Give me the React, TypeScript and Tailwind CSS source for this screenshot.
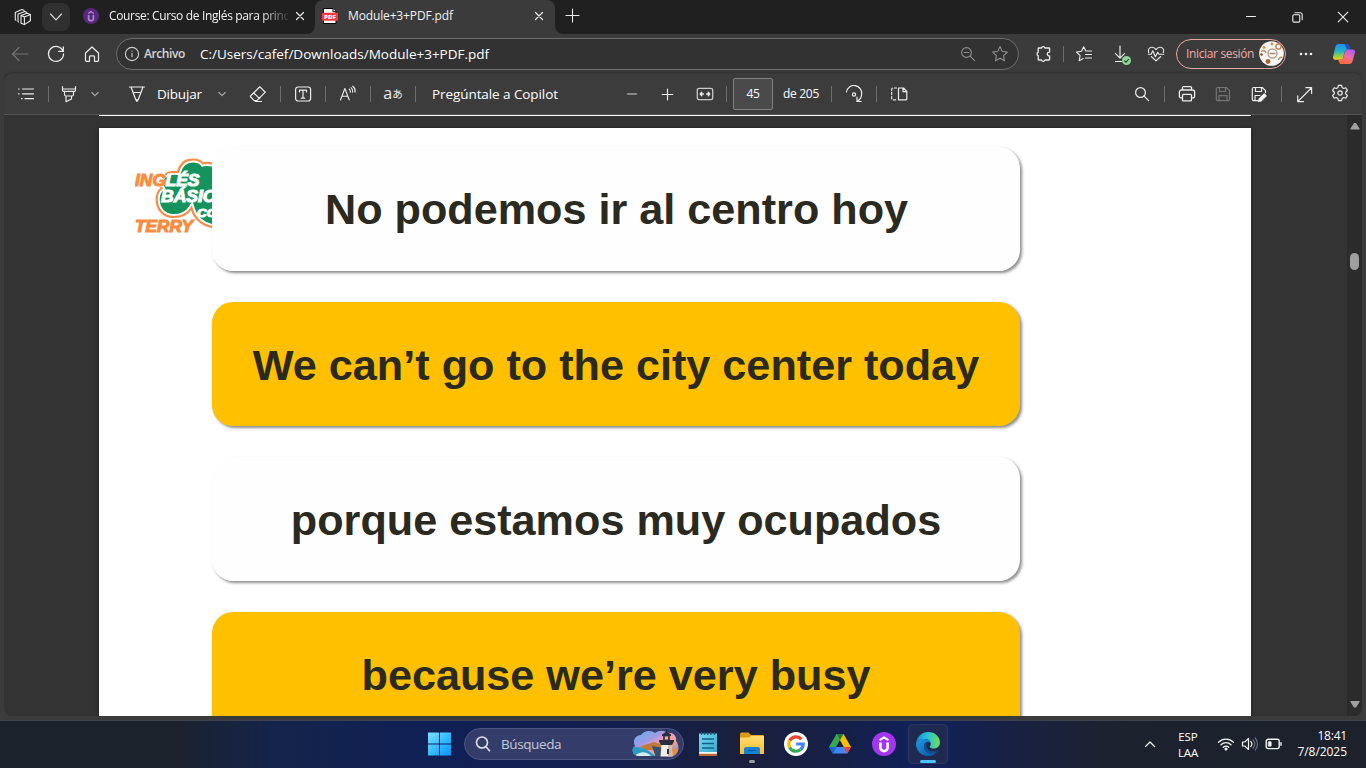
import type { ReactNode } from "react";

const ui = "font-['Open_Sans','Noto_Sans',sans-serif]";

function Icon({
  w = 18,
  h = 18,
  sw = 1.1,
  color = "#ececec",
  children,
}: {
  w?: number;
  h?: number;
  sw?: number;
  color?: string;
  children: ReactNode;
}) {
  return (
    <svg
      width={w}
      height={h}
      viewBox={`0 0 ${w} ${h}`}
      fill="none"
      stroke={color}
      strokeWidth={sw}
      strokeLinecap="round"
      strokeLinejoin="round"
      className="block shrink-0"
    >
      {children}
    </svg>
  );
}

function Slot({ className, children }: { className: string; children: ReactNode }) {
  return <div className={`flex shrink-0 items-center justify-center ${className}`}>{children}</div>;
}

function Label({ text, className }: { text: string; className: string }) {
  return <div className={`shrink-0 leading-5 whitespace-nowrap ${className}`}>{text}</div>;
}

function Divider({ className = "" }: { className?: string }) {
  return <div className={`h-4 w-px shrink-0 bg-[#6e6e6e] ${className}`} />;
}

function Chevron({ color = "#a8a8a8" }: { color?: string }) {
  return (
    <Icon w={10} h={8} color={color}>
      <path d="M1.8 2.5 5 5.7 8.2 2.5" />
    </Icon>
  );
}

function Udemy({ size, bg, fg }: { size: number; bg: string; fg: string }) {
  return (
    <svg width={size} height={size} viewBox="0 0 24 24" className="block shrink-0">
      <circle cx="12" cy="12" r="12" fill={bg} />
      <path d="M7.6 8.2 12 5.4l4.4 2.8" fill="none" stroke={fg} strokeWidth="2" />
      <path d="M8.4 10.5v5.2a3.6 3.4 0 0 0 7.2 0v-5.2" fill="none" stroke={fg} strokeWidth="2.6" />
    </svg>
  );
}

function TabStrip() {
  return (
    <div className="flex h-[34px] shrink-0 bg-[#202020]">
      <Slot className="h-[34px] w-[42px] pl-[3px]">
        <Icon w={18} h={18}>
          <path d="M7 7.6 13 5.2l3.4 1.2v6.400L10.4 16.600 7 15.200ZM7 7.600l3.400 1.300 6-2.500M10.400 8.900v7.700" />
          <path d="M4.600 14 4 13.700V6.200L10.500 3.400l2.200.8M2 12.200 1.300 11.800V4.400L7.800 1.600l2.200.7" />
        </Icon>
      </Slot>
      <Slot className="mt-[3px] h-7 w-7 rounded-lg bg-[#303030]">
        <Icon w={14} h={10} color="#dcdcdc">
          <path d="M1.5 2 7 7.8 12.5 2" />
        </Icon>
      </Slot>
      <div className="flex h-[32px] w-[245px] items-center pl-[13px]">
        <Udemy size={16} bg="#58277f" fg="#a98bc6" />
        <div className="ml-[10px] w-[179px] overflow-hidden [mask-image:linear-gradient(to_right,#000_152px,transparent_182px)]">
          <Label text="Course: Curso de Inglés para princ" className="text-[12px] tracking-[-0.35px] text-[#f2f2f2]" />
        </div>
        <Slot className="ml-[5px] w-[14px]">
          <Icon w={10} h={10} sw={1.2}>
            <path d="M1.5 1.5l7 7M8.5 1.5l-7 7" />
          </Icon>
        </Slot>
      </div>
      <div className="relative flex h-[34px] w-[240px] items-center rounded-t-lg bg-[#3b3b3b] pb-[2px] pl-[7px]">
        <svg width="8" height="8" className="absolute bottom-0 -left-2">
          <path d="M8 0v8H0a8 8 0 0 0 8-8Z" fill="#3b3b3b" />
        </svg>
        <svg width="8" height="8" className="absolute -right-2 bottom-0">
          <path d="M0 0v8h8a8 8 0 0 1-8-8Z" fill="#3b3b3b" />
        </svg>
        <svg width="16" height="16" viewBox="0 0 16 16" className="block">
          <path d="M1.500 .5h9.500l3 3.200V15.500H1.500Z" fill="#fff" stroke="#000" strokeWidth="1" />
          <path d="M11 .5v3.200h3" fill="#fff" stroke="#000" />
          <rect x="0" y="4.700" width="16" height="8" rx="1" fill="#f5383c" />
          <text x="2" y="10.800" fontSize="5.800" fontWeight="800" fill="#fff" textLength="12" lengthAdjust="spacingAndGlyphs">
            PDF
          </text>
        </svg>
        <Label text="Module+3+PDF.pdf" className="ml-[10px] w-[107px] text-[12px] tracking-[-0.14px] text-[#f2f2f2]" />
        <Slot className="ml-[77px] w-[14px]">
          <Icon w={10} h={10} sw={1.2}>
            <path d="M1.5 1.5l7 7M8.5 1.5l-7 7" />
          </Icon>
        </Slot>
      </div>
      <Slot className="h-[31px] w-[35px]">
        <Icon w={15} h={15}>
          <path d="M7.5 1v13M1 7.5h13" />
        </Icon>
      </Slot>
      <div className="ml-auto flex h-[34px]">
        <Slot className="w-[46px]">
          <Icon w={10} h={10}>
            <path d="M.5 4.5h9" />
          </Icon>
        </Slot>
        <Slot className="w-[46px]">
          <Icon w={11} h={11}>
            <path d="M.8 3.9a1.2 1.2 0 0 1 1.2-1.2h4.6a1.2 1.2 0 0 1 1.2 1.2v5a1.2 1.2 0 0 1-1.2 1.2H2A1.2 1.2 0 0 1 .8 8.900ZM3 .8h5.200a2 2 0 0 1 2 2v5" />
          </Icon>
        </Slot>
        <Slot className="w-[46px]">
          <Icon w={12} h={12}>
            <path d="M1.200 1.200l9.600 9.600M10.800 1.200l-9.600 9.600" />
          </Icon>
        </Slot>
      </div>
    </div>
  );
}

const star = "M9 1.600 11.200 6.300 16.400 7 12.600 10.600 13.500 15.800 9 13.300 4.500 15.800 5.400 10.600 1.600 7 6.800 6.300Z";

function AddressRow() {
  return (
    <div className="flex h-[39px] shrink-0 items-center bg-[#3b3b3b]">
      <Slot className="w-10">
        <Icon w={18} h={18} color="#757575">
          <path d="M17 9H1.500M8 2.500 1.500 9 8 15.500" />
        </Icon>
      </Slot>
      <Slot className="w-8">
        <Icon w={18} h={18} sw={1.300}>
          <path d="M16 6.200A7.500 7.500 0 1 0 16.500 9M16.300 1.800v4.600h-4.600" />
        </Icon>
      </Slot>
      <Slot className="w-10">
        <Icon w={18} h={18} sw={1.200}>
          <path d="M2.500 8 9 2l6.500 6v7.500a.8.8 0 0 1-.8.8H11.500v-4.500a1 1 0 0 0-1-1h-3a1 1 0 0 0-1 1v4.500H3.300a.8.8 0 0 1-.8-.8Z" />
        </Icon>
      </Slot>
      <div className="ml-1 flex h-8 w-[903px] shrink-0 items-center rounded-full border border-[#6d6d6d] bg-[#323232] pl-[7px]">
        <Icon w={16} h={16} color="#d0d0d0">
          <circle cx="8" cy="8" r="6.600" />
          <path d="M8 7.300v3.400M8 5.100v.2" />
        </Icon>
        <Label text="Archivo" className="ml-[4px] w-[43px] text-[12px] font-semibold tracking-[-0.4px] text-[#d6d6d6]" />
        <Label text="C:/Users/cafef/Downloads/Module+3+PDF.pdf" className="ml-[13px] w-[291px] text-[13.500px]" />
        <Slot className="ml-auto w-8">
          <Icon w={16} h={16} color="#8f8f8f">
            <circle cx="6.500" cy="6.500" r="4.900" />
            <path d="M10.200 10.200 14.600 14.600M4.300 6.500h4.400" />
          </Icon>
        </Slot>
        <Slot className="mr-[2px] w-8">
          <Icon color="#8f8f8f">
            <path d={star} />
          </Icon>
        </Slot>
      </div>
      <Slot className="ml-1 w-10">
        <Icon sw={1.300}>
          <path d="M4.800 3h2.600a1.900 1.900 0 0 1 3.600 0h4a.6.600 0 0 1 .6.600v3.500a1.900 1.900 0 1 0 0 3.700v3.600a.6.600 0 0 1-.6.600h-4a1.900 1.900 0 0 1-3.600 0H4.800a.6.600 0 0 1-.6-.6v-3.700a1.900 1.900 0 0 1 0-3.500V3.600a.6.600 0 0 1 .6-.6Z" />
        </Icon>
      </Slot>
      <Divider />
      <Slot className="w-10">
        <Icon>
          <path d="M11.500 6H10.800L8.700 1.800 6.500 6.200 1.500 7l3.600 3.600-.9 5.100 4-2.100M11.500 6h5M10.500 9.500h6M10.500 13h6" />
        </Icon>
      </Slot>
      <div className="relative flex w-[35px] items-center justify-center">
        <Icon sw={1.200}>
          <path d="M7 1v12M2.500 8.700 7 13.200l4.500-4.500M2.500 16.500h6" />
        </Icon>
        <svg width="9" height="9" className="absolute top-[11px] left-[18px]">
          <circle cx="4.500" cy="4.500" r="4.500" fill="#8fd694" />
          <path d="M2.300 4.600 4 6.200 6.900 3" fill="none" stroke="#263826" strokeWidth="1.100" />
        </svg>
      </div>
      <Slot className="w-[34px]">
        <Icon>
          <path d="M1.700 7.500C.6 4.500 2.300 2.300 4.800 2.300 6.800 2.300 8.200 3.300 9 4.600c.8-1.300 2.200-2.300 4.200-2.300 2.500 0 4.200 2.200 3.100 5.200M4.300 11.500 9 15.800l4.700-4.300M1.200 9.300h3l1.600-3.500 2.600 6 2.300-4.600 1.200 2.100h4.900" />
        </Icon>
      </Slot>
      <div className="ml-[3px] flex h-[30px] w-[110px] shrink-0 items-center rounded-full border border-[#e9a7a3] pl-[9px]">
        <Label text="Iniciar sesión" className="w-[70px] text-[12px] tracking-[-0.35px] text-[#f0a9a5]" />
        <svg width="25" height="25" viewBox="0 0 25 25" className="ml-[3px] block">
          <circle cx="12.500" cy="12.500" r="12.300" fill="#faf8f5" />
          <g fill="none" stroke="#c18a5a" strokeWidth="1.500">
            <circle cx="13.500" cy="12.500" r="4.500" stroke="#b9a48f" />
            <path d="M10.500 12.500h6" stroke="#9d8c80" />
            <circle cx="19.500" cy="5.500" r="2.600" />
            <path d="M2 10.500a3 3 0 0 1 5 1.500M19.500 19a3 3 0 0 1 4-2.500" />
          </g>
          <circle cx="9" cy="20.500" r="2.400" fill="#b0622b" />
          <circle cx="5" cy="6.500" r="1.400" fill="#d8913f" />
          <circle cx="13" cy="3" r="1.400" fill="#d88c3c" />
          <circle cx="2.500" cy="13.500" r="1.300" fill="#7c4a2c" />
        </svg>
      </div>
      <Slot className="w-10">
        <svg width="14" height="4">
          <circle cx="2" cy="2" r="1.300" fill="#eee" />
          <circle cx="7" cy="2" r="1.300" fill="#eee" />
          <circle cx="12" cy="2" r="1.300" fill="#eee" />
        </svg>
      </Slot>
      <Slot className="w-9">
        <svg width="22" height="20" viewBox="0 0 22 20">
          <defs>
            <linearGradient id="cpA" x1="0" y1="0" x2="0" y2="1">
              <stop offset="0" stopColor="#1f8ff0" />
              <stop offset=".45" stopColor="#1fb6c8" />
              <stop offset=".75" stopColor="#8fce4a" />
              <stop offset="1" stopColor="#f4d029" />
            </linearGradient>
            <linearGradient id="cpB" x1=".7" y1="0" x2=".3" y2="1">
              <stop offset="0" stopColor="#b05cf0" />
              <stop offset=".5" stopColor="#ef6a9d" />
              <stop offset="1" stopColor="#ff6a2c" />
            </linearGradient>
          </defs>
          <path d="M6 0h7.500c1.500 0 2.200 1 2.700 2.600l.8 2.800h-2.600c-1.500 0-2.200.8-2.600 2.100L10 14c-.5 1.400-1 1.800-2.400 1.800H2.500C.8 15.800-.3 14.400.1 12.400L2.400 3C2.900 1 4 0 6 0Z" fill="url(#cpA)" />
          <path d="M13.800 0c1.500 0 2.200 1 2.700 2.600l.8 2.800h-3.600L12.300 1.600C12 .6 11.500 0 10.500 0Z" fill="#2350c4" />
          <path d="M16 20H8.500c-1.500 0-2.200-1-2.700-2.600l-.5-1.600h2.300c1.400 0 1.900-.5 2.400-1.800l2.100-6.500c.4-1.300 1.100-2.100 2.600-2.100h5c1.700 0 2.700 1.400 2.200 3.300L19.600 17c-.5 2-1.600 3-3.600 3Z" fill="url(#cpB)" />
        </svg>
      </Slot>
    </div>
  );
}

function PdfToolbar() {
  return (
    <div className="mx-1 flex h-[42px] shrink-0 items-center rounded-t-lg border-t border-b border-t-[#373737] border-b-[#555] bg-[#3c3c3c] shadow-[0_-1px_2px_rgba(0,0,0,0.18)]">
      <Slot className="w-11">
        <Icon w={18} h={14} sw={1.200}>
          <path d="M1.500 2h.6M5.500 2h11M1.500 6.800h.6M5.500 6.800h11M4.500 11.700h.6M8 11.700h8.500" />
        </Icon>
      </Slot>
      <Divider />
      <Slot className="w-10">
        <Icon sw={1.200}>
          <path d="M2.500 1.500v3.800a1 1 0 0 0 1 1h11a1 1 0 0 0 1-1V1.500M2.500 4h13M4.500 6.300v3.200a1.500 1.500 0 0 0 1.500 1.500h6a1.500 1.500 0 0 0 1.500-1.500V6.300M6 11v5.700l5.500-2.700V11" />
        </Icon>
      </Slot>
      <Slot className="w-3">
        <Chevron />
      </Slot>
      <Slot className="ml-5 w-8">
        <Icon sw={1.200}>
          <path d="M1.500 2h15M3 2l4.800 12.800h2.400L15 2M5.300 7.500h7.400M8 15l1 1.500 1-1.500" />
        </Icon>
      </Slot>
      <Label text="Dibujar" className="ml-1 w-[46px] text-[13.500px] tracking-[-0.2px]" />
      <Slot className="w-[38px]">
        <Chevron />
      </Slot>
      <Slot className="w-[34px]">
        <Icon sw={1.200}>
          <path d="M10.800 1.800 16.300 7.200 7.800 15.700H5.200L1.700 12a.8.8 0 0 1 0-1.200ZM4.700 8l6 5.600M6.500 16.500h6" />
        </Icon>
      </Slot>
      <Divider className="ml-[5px]" />
      <Slot className="w-11">
        <Icon sw={1.200}>
          <rect x="1.600" y="2" width="15" height="14" rx="2.500" />
          <path d="M5.500 7V5.200h7V7M9 5.200v8M7.300 13.200h3.400" />
        </Icon>
      </Slot>
      <Divider />
      <Slot className="w-11">
        <Icon sw={1.100}>
          <path d="M1.500 15 5.900 3.500 10.300 15M3 11.300h5.700M10.300 4.200c.9.700 1.200 1.700 1.100 2.900M12 2.600c1.400 1 1.900 2.700 1.700 4.500M13.800 1.200c1.900 1.500 2.600 3.600 2.300 5.900" />
        </Icon>
      </Slot>
      <Divider />
      <Slot className="w-11 pb-[3px] text-[#ececec]">
        <span className="text-[16px] leading-none">a</span>
        <span className="pt-[3px] font-['Noto_Sans_CJK_JP',sans-serif] text-[10.500px] leading-none">あ</span>
      </Slot>
      <Divider />
      <Label text="Pregúntale a Copilot" className="ml-4 w-[130px] text-[13.500px] tracking-[-0.08px]" />
      <Slot className="ml-[54px] w-8">
        <Icon w={12} h={4} color="#a0a0a0" sw={1.400}>
          <path d="M1.500 2h9" />
        </Icon>
      </Slot>
      <Slot className="w-[39px]">
        <Icon w={13} h={13} sw={1.200}>
          <path d="M6.500 1.200v10.600M1.200 6.500h10.600" />
        </Icon>
      </Slot>
      <Slot className="w-[35px]">
        <Icon sw={1.300}>
          <rect x="1.300" y="3.300" width="15.400" height="11.400" rx="1.800" stroke="#c8c8c8" />
          <path d="M4.500 9h3M10.500 9h3M5.800 7.300 4.200 9l1.600 1.700M12.200 7.300 13.800 9l-1.600 1.700" />
        </Icon>
      </Slot>
      <Divider className="ml-1" />
      <div className="ml-[6px] flex h-8 w-10 shrink-0 items-center justify-center rounded-[2px] border border-[#808080] bg-[#4a4a4a]">
        <Label text="45" className="text-[12px] tracking-[-0.3px]" />
      </div>
      <Label text="de 205" className="ml-[10px] w-[37px] text-[12px] tracking-[-0.3px]" />
      <Divider className="ml-[11px]" />
      <Slot className="w-11">
        <Icon sw={1.200}>
          <path d="M1.500 7A7.600 7.600 0 0 1 16.600 9.200c0 2.700-1.300 5-3.600 6.600M12 12.200v4.300h4.200" />
          <circle cx="9" cy="9.500" r="1.600" />
        </Icon>
      </Slot>
      <Divider />
      <Slot className="w-11">
        <Icon sw={1.200}>
          <path d="M8.500 3h5l3.300 3.300V14a.8.8 0 0 1-.8.8H8.500ZM13 3v3.700h3.700" />
          <path d="M6.500 3H3a1.300 1.300 0 0 0-1.300 1.300V13.500A1.300 1.300 0 0 0 3 14.800h3.500" strokeDasharray="2.200 2" />
        </Icon>
      </Slot>
      <div className="ml-auto flex items-center">
        <Slot className="w-9">
          <Icon w={16} h={16} sw={1.200}>
            <circle cx="6.500" cy="6.500" r="4.900" />
            <path d="M10.200 10.200 14.600 14.600" />
          </Icon>
        </Slot>
        <Divider className="ml-1" />
        <Slot className="ml-1 w-9">
          <Icon sw={1.300}>
            <path d="M4.500 5V2.600a.9.900 0 0 1 .9-.9h7.200a.9.900 0 0 1 .9.900V5M4.500 12.800H2.800a1.400 1.400 0 0 1-1.400-1.400V7a2 2 0 0 1 2-2h11.200a2 2 0 0 1 2 2v4.400a1.400 1.400 0 0 1-1.400 1.400H13.500" />
            <rect x="4.500" y="9.300" width="9" height="6.500" rx=".9" />
          </Icon>
        </Slot>
        <Slot className="w-9">
          <Icon color="#757575" sw={1.200}>
            <path d="M3.800 2.500h8.500l3.200 3.200v8.500a1.500 1.500 0 0 1-1.500 1.500H3.800a1.500 1.500 0 0 1-1.500-1.500V4a1.500 1.500 0 0 1 1.500-1.500ZM5.500 2.500v4h6v-4M5 15.700v-5h8v5" />
          </Icon>
        </Slot>
        <Slot className="w-9">
          <Icon sw={1.200}>
            <path d="M7.500 15.700H3.800a1.500 1.500 0 0 1-1.500-1.500V4a1.500 1.500 0 0 1 1.500-1.500h8.500l3.200 3.200v2M5.500 2.500v4h6v-4M5 15.500v-5h5" />
            <path d="M8.500 16.500l.7-2.700 5-5 2 2-5 5Z" fill="#fff" />
          </Icon>
        </Slot>
        <Divider className="ml-1" />
        <Slot className="ml-2 w-7">
          <Icon w={17} h={17} sw={1.200}>
            <path d="M2 15.300 15.300 2M9.800 1.700h5.800v5.800M1.700 9.800v5.800h5.800" />
          </Icon>
        </Slot>
        <Slot className="w-11 pb-[2px]">
          <Icon sw={1.200}>
            <path d="M7.400 1.300h3.200l.5 2.300 1.500.9 2.200-.7 1.600 2.800L14.700 8.200v1.700l1.700 1.500-1.600 2.800-2.200-.7-1.500.9-.5 2.300H7.400l-.5-2.300-1.500-.9-2.200.7-1.600-2.800 1.700-1.500V8.200L1.600 6.600l1.600-2.800 2.200.7 1.500-.9Z" />
            <circle cx="9" cy="9" r="2.200" />
          </Icon>
        </Slot>
      </div>
    </div>
  );
}

function Logo() {
  const cloud =
    "M26 30C29 26 34 23 43 24 45 16 50 11.500 58 11.500 63 11.500 66 13 68 15.500 71 14.500 75 14.500 84 17V80C70 79 60 73 56.500 60 52 67 46 69 38.500 69 28 69 21.700 61 21.700 51 21.700 47 23 43 26.700 40 25 37 25 33 26 30Z";
  return (
    <svg width="77" height="90" viewBox="0 0 77 90" className="block overflow-hidden font-['Liberation_Sans',sans-serif]">
      <path d={cloud} fill="#14945c" stroke="#fff" strokeWidth="6" />
      <path d={cloud} fill="none" stroke="#f98c45" strokeWidth="2.200" />
      <path d="M-1 23.500H30.500L28 39H-1Z" fill="#fff" />
      <g fontWeight="900" fontStyle="italic" fontSize="16.500" strokeWidth="1.100">
        <text x="0" y="37.500" textLength="31" lengthAdjust="spacingAndGlyphs" fill="#f98c3e" stroke="#f98c3e">
          ING
        </text>
        <text x="30.500" y="37.500" textLength="34" lengthAdjust="spacingAndGlyphs" fill="#fff" stroke="#fff">
          LÉS
        </text>
        <text x="26" y="54" textLength="68" lengthAdjust="spacingAndGlyphs" fill="#fff" stroke="#fff">
          BÁSICO
        </text>
        <text x="62" y="69" fontSize="11.500" textLength="20" lengthAdjust="spacingAndGlyphs" fill="#fff" stroke="#fff">
          CO
        </text>
        <text x="0" y="84" textLength="58" lengthAdjust="spacingAndGlyphs" fill="#f98c3e" stroke="#f98c3e">
          TERRY
        </text>
      </g>
    </svg>
  );
}

const cards = [
  { text: "No podemos ir al centro hoy", style: "bg-[#fefefe] pt-[2px] pl-px" },
  { text: "We can’t go to the city center today", style: "bg-[#ffc000] pt-1" },
  { text: "porque estamos muy ocupados", style: "bg-[#fefefe] pt-1" },
  { text: "because we’re very busy", style: "bg-[#ffc000] pt-1" },
];

function Viewer() {
  return (
    <div className="flex h-[605px] shrink-0 bg-[#3b3b3b] px-1 pb-1">
      <div className="flex min-w-0 flex-1 overflow-hidden rounded-b-lg bg-[#333]">
        <div className="flex w-[1343px] shrink-0 flex-col overflow-hidden pl-[95px]">
          <div className="h-px w-[1152px] shrink-0 bg-white" />
          <div className="mt-3 flex h-[700px] w-[1152px] shrink-0 bg-white shadow-[0_0_4px_rgba(0,0,0,0.4)]">
            <div className="w-[113px] pt-[20px] pl-9">
              <Logo />
            </div>
            <div className="flex w-[808px] flex-col gap-[31px] pt-[19px]">
              {cards.map((c) => (
                <div
                  key={c.text}
                  className={`flex h-[124px] shrink-0 items-center justify-center rounded-[21px] shadow-[2px_2px_3px_rgba(0,0,0,0.45)] ${c.style}`}
                >
                  <span className="font-['Liberation_Sans',Arial,sans-serif] text-[43.200px] leading-none font-bold whitespace-nowrap text-[#2b2a20]">
                    {c.text}
                  </span>
                </div>
              ))}
            </div>
          </div>
        </div>
        <div className="flex w-[15px] flex-col items-center bg-[#2b2b2b] pt-[7px] pb-[8px]">
          <svg width="10" height="8">
            <path d="M4 1h2l3.500 5.500v1h-9v-1Z" fill="#a0a0a0" />
          </svg>
          <div className="mt-[123px] h-[17px] w-[9px] rounded-full bg-[#9f9f9f]" />
          <svg width="10" height="8" className="mt-auto">
            <path d="M4 7.500h2l3.500-5.500v-1h-9v1Z" fill="#a0a0a0" />
          </svg>
        </div>
      </div>
    </div>
  );
}

function Lighthouse() {
  return (
    <svg width="47" height="28" viewBox="0 0 47 28" className="block">
      <defs>
        <linearGradient id="sky" x1="0" y1="0" x2="1" y2="1">
          <stop offset="0" stopColor="#5cb4f2" />
          <stop offset=".35" stopColor="#9d9be6" />
          <stop offset=".5" stopColor="#eb9cc0" />
          <stop offset=".65" stopColor="#f6a58c" />
          <stop offset="1" stopColor="#4d7fd8" />
        </linearGradient>
        <clipPath id="blob">
          <path d="M6 26C0 25-1 19 3 16 0 10 4 5 9 5c3-5 11-5 14-2 4-3 9-3 12 0 6-1 10 3 9 8 4 4 3 13-3 15Z" />
        </clipPath>
      </defs>
      <g clipPath="url(#blob)">
        <rect width="47" height="28" fill="url(#sky)" />
        <path d="M8 16.500 22 12l10 3v5H14Z" fill="#c07a38" />
        <path d="M20 16l12 2v10H24Z" fill="#34506f" />
        <path d="M0 17c8-1 16 2 24 10v1H0Z" fill="#2a9dc2" />
        <path d="M4 25c5-4 11-4 16 2H4Z" fill="#d5ebf2" />
        <path d="M38 20l9-2v10h-9Z" fill="#e78a45" />
      </g>
      <path d="M29.500 14h10l1 12.500h-12Z" fill="#f3ece4" />
      <path d="M36 14h3.500l1 12.500H36Z" fill="#cbb9b4" />
      <path d="M35 19h2v5h-2Z" fill="#2d3040" />
      <path d="M27 10h15v1.500l-2 3.500H29l-2-3.500ZM30 4.500l4.500-3 4.500 3V6h-9Z" fill="#2c2d3e" />
      <path d="M31 6h7v4h-7Z" fill="#4c4350" />
      <path d="M33 6.500h3v3h-3Z" fill="#f6b65b" />
      <path d="M34.500 0v3" stroke="#232638" />
    </svg>
  );
}

function Taskbar() {
  return (
    <div className="flex h-12 shrink-0 items-center border-t border-[#3d4350] bg-[linear-gradient(to_right,#1c222b_0px,#1c222b_170px,#14244a_270px,#101f55_430px,#131f4e_620px,#1a1f3c_740px,#161f45_830px,#10215a_925px,#182143_1010px,#1c222e_1110px,#1c212b_1366px)] pb-[2px]">
      <svg width="24" height="24" viewBox="0 0 24 24" className="ml-[428px] block">
        <defs>
          <linearGradient id="win" x1="0" y1="0" x2="1" y2="1">
            <stop offset="0" stopColor="#7fe0ff" />
            <stop offset=".5" stopColor="#36bdff" />
            <stop offset="1" stopColor="#0a93fa" />
          </linearGradient>
        </defs>
        <path d="M0 .5h11v11H0ZM12 .5h11v11H12ZM0 12.500h11v11H0ZM12 12.500h11v11H12Z" fill="url(#win)" />
      </svg>
      <div className="ml-3 flex h-8 w-[220px] shrink-0 items-center rounded-full border border-[#4c5480] bg-[#343d69] pl-[9px]">
        <Icon w={18} h={18} color="#dfe1ea" sw={1.600}>
          <circle cx="8" cy="7.500" r="5.500" />
          <path d="M12 11.800 15.500 15.800" />
        </Icon>
        <Label text="Búsqueda" className="ml-[9px] w-[62px] text-[13.500px] tracking-[-0.4px] text-[#c5c8d6]" />
        <div className="mr-[4px] ml-auto">
          <Lighthouse />
        </div>
      </div>
      <Slot className="ml-1 w-10">
        <svg width="18" height="24" viewBox="0 0 18 24">
          <defs>
            <linearGradient id="note" x1="0" y1="0" x2="1" y2="1">
              <stop offset="0" stopColor="#76dcee" />
              <stop offset="1" stopColor="#3aa6cc" />
            </linearGradient>
          </defs>
          <path d="M0 20h18v4H0Z" fill="#b86a3b" />
          <path d="M0 19.500h18v2.300H0Z" fill="#f4f4f4" />
          <path d="M0 1.500h18V20H0Z" fill="url(#note)" />
          <path d="M2.500 0v3M5.500 0v3M8.700 0v3M12 0v3M15.300 0v3" stroke="#1c5a78" strokeWidth="1.300" />
          <path d="M3 7h12M3 11.500h12M3 16h12" stroke="#10648a" strokeWidth="1.500" />
        </svg>
      </Slot>
      <div className="relative ml-1 flex h-10 w-10 items-center justify-center">
        <svg width="24" height="23" viewBox="0 0 24 23">
          <defs>
            <linearGradient id="fold" x1="0" y1="0" x2="0" y2="1">
              <stop offset="0" stopColor="#ffdc72" />
              <stop offset="1" stopColor="#fdc02c" />
            </linearGradient>
          </defs>
          <path d="M0 2a1.500 1.500 0 0 1 1.500-1.500h7L11 3h11.500A1.500 1.500 0 0 1 24 4.500V8H0Z" fill="#dc9a10" />
          <path d="M0 5.500h9L11 3.800h13V22H0Z" fill="url(#fold)" />
          <path d="M4 22v-5a2 2 0 0 1 2-2h12a2 2 0 0 1 2 2v5Z" fill="#1683d8" />
          <path d="M8 18.500h8" stroke="#0d5ca8" strokeWidth="1.300" />
        </svg>
        <div className="absolute bottom-[1px] h-[3px] w-[6px] rounded-full bg-[#9a9ca6]" />
      </div>
      <Slot className="ml-1 w-10">
        <svg width="24" height="24" viewBox="0 0 24 24">
          <circle cx="12" cy="12" r="12" fill="#fff" />
          <g fill="none" strokeWidth="3.200">
            <path d="M17.500 7.300A7.200 7.200 0 0 0 5.700 8.600" stroke="#ea4335" />
            <path d="M5.700 8.600a7.200 7.200 0 0 0 0 6.800" stroke="#fbbc05" />
            <path d="M5.700 15.400a7.200 7.200 0 0 0 10.900 2.200" stroke="#34a853" />
            <path d="M16.600 17.600A7 7 0 0 0 19.200 12H12.200" stroke="#4285f4" />
          </g>
        </svg>
      </Slot>
      <Slot className="ml-1 w-10">
        <svg width="22" height="20" viewBox="0 0 22 20">
          <path d="M7.500 0h7l-3.700 6.300L3.700 19 0 13Z" fill="#34a853" />
          <path d="M7.500 0h7L22 13h-7.200Z" fill="#fbbc04" />
          <path d="M7.500 0h7L11 6.200Z" fill="#188038" />
          <path d="M7.200 13H22l-3.700 6.500H3.700Z" fill="#4285f4" />
          <path d="M0 13h7.200l-3.500 6.500Z" fill="#1967d2" />
          <path d="M14.800 13H22l-3.700 6.500Z" fill="#ea4335" />
        </svg>
      </Slot>
      <Slot className="ml-1 w-10">
        <Udemy size={24} bg="#a435f0" fg="#fff" />
      </Slot>
      <div className="relative ml-1 flex h-10 w-10 shrink-0 items-center justify-center rounded-[4px] border border-[#2b3664] bg-[#1f2a50]">
        <svg width="24" height="24" viewBox="0 0 24 24">
          <defs>
            <linearGradient id="eA" x1="0" y1=".4" x2="1" y2=".4">
              <stop offset="0" stopColor="#1c8fdc" />
              <stop offset=".5" stopColor="#2cc3d4" />
              <stop offset="1" stopColor="#6fe04e" />
            </linearGradient>
            <linearGradient id="eB" x1="0" y1="0" x2="1" y2="1">
              <stop offset="0" stopColor="#1f9be6" />
              <stop offset="1" stopColor="#0c4f9c" />
            </linearGradient>
          </defs>
          <path d="M.3 10.500C1.200 4.400 6.200 0 12.100 0 19 0 24 5 24 10.500c0 3.600-2.800 6-6 6-2.600 0-4.200-.9-4.200-1.800 0-.6 1-1 1-2.900 0-2.500-2.500-4.700-6-4.700C4.500 7.100 1.500 8.700.3 10.500Z" fill="url(#eA)" />
          <path d="M0 12C0 9 3.700 6.900 8.500 7.100c3.700.1 6.300 2.200 6.300 4.700-1-1.500-2.600-2.200-4-1.900-3 .8-4 6 .2 9.500C14.500 22.200 19.500 21 22 18.500 20 22 16.300 24 12 24 5.400 24 0 18.600 0 12Z" fill="url(#eB)" />
          <path d="M8 15.500c.5 5 6 8 11.500 5.300.9-.5 2.300-1.600 2.600-2.300-3.500 1.800-9.500 1.300-11.200-2.500-1-2.200-.4-4.700.6-6-2.100.6-3.700 2.900-3.500 5.500Z" fill="#124f91" />
        </svg>
        <div className="absolute bottom-0 h-[3px] w-4 rounded-full bg-[#4cc2ff]" />
      </div>
      <div className="ml-auto flex h-full items-center">
        <Icon w={12} h={8} color="#f2f2f2" sw={1.300}>
          <path d="M1.500 6.500 6 2l4.500 4.500" />
        </Icon>
        <div className="ml-[20px] flex w-[24px] flex-col items-center pt-[3px] text-[11.500px] tracking-[-0.1px]">
          <div className="leading-4">ESP</div>
          <div className="leading-4">LAA</div>
        </div>
        <div className="ml-[17px] flex items-center">
          <Icon w={18} h={14} color="#f4f4f4" sw={1.300}>
            <path d="M1.500 5.200a10.500 10.500 0 0 1 15 0M4 7.800a7 7 0 0 1 10 0M6.300 10.200a3.800 3.800 0 0 1 5.400 0" />
            <circle cx="9" cy="12" r=".9" fill="#fff" />
          </Icon>
          <div className="ml-[6px]">
            <Icon w={18} h={14} color="#f4f4f4" sw={1.200}>
              <path d="M1.500 5h2.300L7.500 1.500v11L3.800 9H1.500ZM9.800 4.500a3.500 3.500 0 0 1 0 5" />
              <path d="M12 2.800a6 6 0 0 1 0 8.400M14.200 1a9 9 0 0 1 0 12" stroke="#6b7079" />
            </Icon>
          </div>
          <div className="ml-[6px]">
            <Icon w={18} h={12} color="#f4f4f4" sw={1.400}>
              <rect x="1.200" y="1.300" width="13" height="9.300" rx="2" />
              <path d="M16 4.800v2.400" />
              <path d="M3.600 3.800h2.500v4.300H3.600Z" fill="#fff" strokeWidth=".8" />
            </Icon>
          </div>
        </div>
        <div className="mr-[19px] flex w-[64px] flex-col items-end pt-px text-[12px] tracking-[-0.05px]">
          <div className="leading-4 tracking-[-0.2px]">18:41</div>
          <div className="leading-4">7/8/2025</div>
        </div>
      </div>
    </div>
  );
}

export default function App() {
  return (
    <div className={`flex h-[768px] w-[1366px] flex-col overflow-hidden bg-[#3b3b3b] text-white ${ui}`}>
      <TabStrip />
      <AddressRow />
      <PdfToolbar />
      <Viewer />
      <Taskbar />
    </div>
  );
}
